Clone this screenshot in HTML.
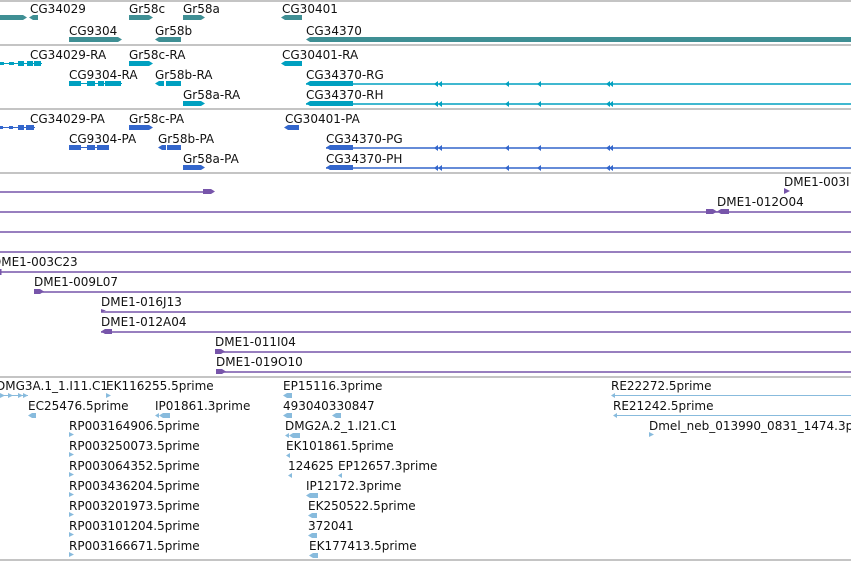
<!DOCTYPE html>
<html><head><meta charset="utf-8"><style>
html,body{margin:0;padding:0;background:#fff;width:851px;height:561px;overflow:hidden}
svg text{font-family:"DejaVu Sans",sans-serif;font-size:12px;fill:#111}
</style></head><body>
<svg width="851" height="561" xmlns="http://www.w3.org/2000/svg">
<g stroke="#c4c4c4" stroke-width="2">
<line x1="0" y1="1" x2="851" y2="1"/><line x1="0" y1="45" x2="851" y2="45"/><line x1="0" y1="109" x2="851" y2="109"/><line x1="0" y1="173" x2="851" y2="173"/><line x1="0" y1="377" x2="851" y2="377"/><line x1="0" y1="560" x2="851" y2="560"/>
</g>
<!-- genes -->
<g fill="#3f8f94">
<polygon points="0,15 23,15 27,17.5 23,20 0,20"/><polygon points="29,17.5 33,15 38,15 38,20 33,20"/>
<polygon points="129,15 149,15 153,17.5 149,20 129,20"/>
<polygon points="183,15 201,15 205,17.5 201,20 183,20"/>
<polygon points="281,17.5 285,15 302,15 302,20 285,20"/>
<polygon points="69,37 118,37 122,39.5 118,42 69,42"/>
<polygon points="155,39.5 159,37 181,37 181,42 159,42"/>
<polygon points="306,39.5 310,37 851,37 851,42 310,42"/>
</g>
<text x="30" y="13">CG34029</text><text x="129" y="13">Gr58c</text><text x="183" y="13">Gr58a</text><text x="282" y="13">CG30401</text>
<text x="69" y="35">CG9304</text><text x="155" y="35">Gr58b</text><text x="306" y="35">CG34370</text>
<!-- transcripts -->
<g fill="#00a0c0" stroke="#00a0c0">
<line x1="0" y1="63.5" x2="42" y2="63.5" stroke-width="1"/>
<rect x="0" y="62" width="4" height="3" stroke="none"/><rect x="9" y="62" width="5" height="3" stroke="none"/><rect x="18" y="61" width="6" height="5" stroke="none"/><rect x="27" y="61" width="6" height="5" stroke="none"/><rect x="34" y="61" width="7" height="5" stroke="none"/>
<polygon points="129,61 149,61 153,63.5 149,66 129,66" stroke="none"/>
<polygon points="281,63.5 285,61 302,61 302,66 285,66" stroke="none"/>
<line x1="69" y1="83.5" x2="122" y2="83.5" stroke-width="1"/>
<rect x="69" y="81" width="12" height="5" stroke="none"/><rect x="87" y="81" width="8" height="5" stroke="none"/><rect x="98" y="81" width="6" height="5" stroke="none"/><rect x="105" y="81" width="16" height="5" stroke="none"/>
<polygon points="155,83.5 159,81 164,81 164,86 159,86" stroke="none"/><rect x="166" y="81" width="15" height="5" stroke="none"/>
<line x1="306" y1="84" x2="851" y2="84" stroke-width="1.5"/><polygon points="306,83.5 310,81 353,81 353,86 310,86" stroke="none"/>
<polygon points="183,101 201,101 205,103.5 201,106 183,106" stroke="none"/>
<line x1="306" y1="104" x2="851" y2="104" stroke-width="1.5"/><polygon points="306,103.5 310,101 353,101 353,106 310,106" stroke="none"/>
</g>
<g fill="#00a0c0">
<path d="M434,84l4,-3v6zM438,84l4,-3v6zM505,84l4,-3v6zM537,84l4,-3v6zM606,84l4,-3v6zM609,84l4,-3v6z"/>
<path d="M434,104l4,-3v6zM438,104l4,-3v6zM505,104l4,-3v6zM537,104l4,-3v6zM606,104l4,-3v6zM609,104l4,-3v6z"/>
</g>
<text x="30" y="59">CG34029-RA</text><text x="129" y="59">Gr58c-RA</text><text x="282" y="59">CG30401-RA</text>
<text x="69" y="79">CG9304-RA</text><text x="155" y="79">Gr58b-RA</text><text x="306" y="79">CG34370-RG</text>
<text x="183" y="99">Gr58a-RA</text><text x="306" y="99">CG34370-RH</text>
<!-- proteins -->
<g fill="#3366cc" stroke="#3366cc">
<line x1="0" y1="127.5" x2="35" y2="127.5" stroke-width="1"/>
<rect x="0" y="126" width="3" height="3" stroke="none"/><rect x="9" y="126" width="4" height="3" stroke="none"/><rect x="18" y="125" width="6" height="5" stroke="none"/><rect x="26" y="125" width="8" height="5" stroke="none"/>
<polygon points="129,125 149,125 153,127.5 149,130 129,130" stroke="none"/>
<polygon points="284,127.5 288,125 299,125 299,130 288,130" stroke="none"/>
<line x1="69" y1="147.5" x2="109" y2="147.5" stroke-width="1"/>
<rect x="69" y="145" width="12" height="5" stroke="none"/><rect x="87" y="145" width="8" height="5" stroke="none"/><rect x="97" y="145" width="12" height="5" stroke="none"/>
<polygon points="158,147.5 162,145 166,145 166,150 162,150" stroke="none"/><rect x="167" y="145" width="14" height="5" stroke="none"/>
<line x1="326" y1="148" x2="851" y2="148" stroke-width="1.5"/><polygon points="326,147.5 330,145 353,145 353,150 330,150" stroke="none"/>
<polygon points="183,165 201,165 205,167.5 201,170 183,170" stroke="none"/>
<line x1="326" y1="168" x2="851" y2="168" stroke-width="1.5"/><polygon points="326,167.5 330,165 353,165 353,170 330,170" stroke="none"/>
</g>
<g fill="#3366cc">
<path d="M434,148l4,-3v6zM438,148l4,-3v6zM505,148l4,-3v6zM537,148l4,-3v6zM606,148l4,-3v6zM609,148l4,-3v6z"/>
<path d="M434,168l4,-3v6zM438,168l4,-3v6zM505,168l4,-3v6zM537,168l4,-3v6zM606,168l4,-3v6zM609,168l4,-3v6z"/>
</g>
<text x="30" y="123">CG34029-PA</text><text x="129" y="123">Gr58c-PA</text><text x="285" y="123">CG30401-PA</text>
<text x="69" y="143">CG9304-PA</text><text x="158" y="143">Gr58b-PA</text><text x="326" y="143">CG34370-PG</text>
<text x="183" y="163">Gr58a-PA</text><text x="326" y="163">CG34370-PH</text>
<!-- purple clones -->
<g stroke="#7755aa" stroke-width="1.5" fill="#7755aa">
<line x1="0" y1="192" x2="205" y2="192"/>
<line x1="0" y1="212" x2="851" y2="212"/>
<line x1="0" y1="232" x2="851" y2="232"/>
<line x1="0" y1="252" x2="851" y2="252"/>
<line x1="0" y1="272" x2="851" y2="272"/>
<line x1="34" y1="292" x2="851" y2="292"/>
<line x1="101" y1="312" x2="851" y2="312"/>
<line x1="101" y1="332" x2="851" y2="332"/>
<line x1="215" y1="352" x2="851" y2="352"/>
<line x1="216" y1="372" x2="851" y2="372"/>
</g>
<g fill="#7755aa">
<polygon points="203,189 211,189 215,191.5 211,194 203,194"/>
<polygon points="784,188 790,191 784,194"/>
<polygon points="706,209 713,209 717,211.5 713,214 706,214"/><polygon points="717,211.5 721,209 729,209 729,214 721,214"/>
<rect x="0" y="269" width="1.5" height="6"/>
<polygon points="34,289 40,289 44,291.5 40,294 34,294"/>
<polygon points="101,309 106,310.5 101,312"/>
<polygon points="101,331.5 105,329 112,329 112,334 105,334"/>
<polygon points="215,349 221,349 225,351.5 221,354 215,354"/>
<polygon points="216,369 222,369 226,371.5 222,374 216,374"/>
</g>
<text x="784" y="186">DME1-003I</text><text x="717" y="206">DME1-012O04</text>
<text x="-8" y="266">DME1-003C23</text><text x="34" y="286">DME1-009L07</text><text x="101" y="306">DME1-016J13</text><text x="101" y="326">DME1-012A04</text><text x="215" y="346">DME1-011I04</text><text x="216" y="366">DME1-019O10</text>
<!-- ESTs -->
<g fill="#88bbdd" stroke="#88bbdd">
<line x1="0" y1="395.5" x2="28" y2="395.5" stroke-width="1"/>
<path d="M0,393l5,2.5l-5,2.5zM8,393l5,2.5l-5,2.5zM18,393l5,2.5l-5,2.5zM23,393l5,2.5l-5,2.5z" stroke="none"/>
<path d="M106,393l5,2.5l-5,2.5z" stroke="none"/>
<polygon points="283,395.5 287,393 292,393 292,398 287,398" stroke="none"/>
<line x1="612" y1="395.5" x2="851" y2="395.5" stroke-width="1"/><path d="M611,395.5l4,-2.5v5z" stroke="none"/>
<polygon points="28,415.5 32,413 36,413 36,418 32,418" stroke="none"/>
<path d="M155,415.5l4,-2.5v5zM159,415.5l4,-2.5v5z" stroke="none"/><rect x="163" y="413" width="7" height="5" stroke="none"/>
<polygon points="283,415.5 287,413 292,413 292,418 287,418" stroke="none"/><polygon points="332,415.5 336,413 341,413 341,418 336,418" stroke="none"/>
<line x1="614" y1="415.5" x2="851" y2="415.5" stroke-width="1"/><path d="M613,415.5l4,-2.5v5z" stroke="none"/>
<path d="M285,435.5l4,-2.5v5zM289,435.5l4,-2.5v5z" stroke="none"/><rect x="293" y="433" width="7" height="5" stroke="none"/>
<path d="M649,432l5,2.5l-5,2.5z" stroke="none"/>
<path d="M286,455.5l4,-2.5v5z" stroke="none"/>
<path d="M288,475.5l4,-2.5v5zM338,475.5l4,-2.5v5z" stroke="none"/>
<polygon points="306,495.5 310,493 318,493 318,498 310,498" stroke="none"/>
<polygon points="308,515.5 312,513 317,513 317,518 312,518" stroke="none"/>
<polygon points="308,535.5 312,533 317,533 317,538 312,538" stroke="none"/>
<polygon points="309,555.5 313,553 318,553 318,558 313,558" stroke="none"/>
</g>
<g fill="#88bbdd">
<path d="M69,432l5,2.5l-5,2.5zM69,452l5,2.5l-5,2.5zM69,472l5,2.5l-5,2.5zM69,492l5,2.5l-5,2.5zM69,512l5,2.5l-5,2.5zM69,532l5,2.5l-5,2.5zM69,552l5,2.5l-5,2.5z"/>
</g>
<text x="-4" y="390">DMG3A.1_1.I11.C1</text><text x="106" y="390">EK116255.5prime</text><text x="283" y="390">EP15116.3prime</text><text x="611" y="390">RE22272.5prime</text>
<text x="28" y="410">EC25476.5prime</text><text x="155" y="410">IP01861.3prime</text><text x="283" y="410">493040330847</text><text x="613" y="410">RE21242.5prime</text>
<text x="69" y="430">RP003164906.5prime</text><text x="285" y="430">DMG2A.2_1.I21.C1</text><text x="649" y="430">Dmel_neb_013990_0831_1474.3prime</text>
<text x="69" y="450">RP003250073.5prime</text><text x="286" y="450">EK101861.5prime</text>
<text x="69" y="470">RP003064352.5prime</text><text x="288" y="470">124625</text><text x="338" y="470">EP12657.3prime</text>
<text x="69" y="490">RP003436204.5prime</text><text x="306" y="490">IP12172.3prime</text>
<text x="69" y="510">RP003201973.5prime</text><text x="308" y="510">EK250522.5prime</text>
<text x="69" y="530">RP003101204.5prime</text><text x="308" y="530">372041</text>
<text x="69" y="550">RP003166671.5prime</text><text x="309" y="550">EK177413.5prime</text>
</svg>
</body></html>
